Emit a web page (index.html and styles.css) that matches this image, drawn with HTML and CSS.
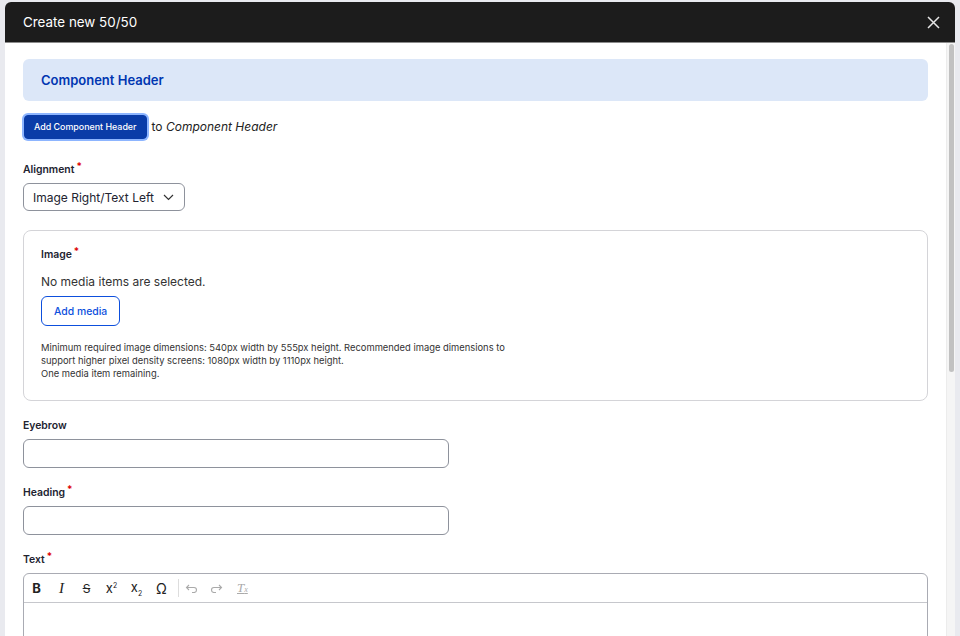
FILE: index.html
```html
<!DOCTYPE html>
<html lang="en">
<head>
    <meta charset="UTF-8">
    <meta name="viewport" content="width=device-width, initial-scale=1.0">
    <title>Create new 50/50</title>
    <link rel="stylesheet" href="styles.css">
</head>
<body>
    <div class="dialog">
        <div class="dialog-title">
            <span>Create new 50/50</span>
            <svg class="close" width="13" height="13" viewBox="0 0 13 13">
                <path d="M1 1 L12 12 M12 1 L1 12" stroke="#e6e6e6" stroke-width="1.5" fill="none"/>
            </svg>
        </div>
        <div class="dialog-body">
            <div class="content">
                <div class="section-header">Component Header</div>

                <div class="add-row">
                    <button class="btn-primary">Add Component Header</button>
                    <span>to <em>Component Header</em></span>
                </div>

                <div class="field first">
                    <label class="label required">Alignment</label>
                    <div class="select">
                        <span>Image Right/Text Left</span>
                        <svg width="11" height="7" viewBox="0 0 11 7">
                            <path d="M1 1 L5.5 5.5 L10 1" stroke="#333" stroke-width="1.2" fill="none"/>
                        </svg>
                    </div>
                </div>

                <div class="media-box">
                    <label class="label required">Image</label>
                    <p class="media-empty">No media items are selected.</p>
                    <button class="btn-outline">Add media</button>
                    <div class="description">
                        Minimum required image dimensions: 540px width by 555px height. Recommended image dimensions to<br>
                        support higher pixel density screens: 1080px width by 1110px height.<br>
                        One media item remaining.
                    </div>
                </div>

                <div class="field">
                    <label class="label">Eyebrow</label>
                    <input class="text-input" type="text">
                </div>

                <div class="field">
                    <label class="label required">Heading</label>
                    <input class="text-input" type="text">
                </div>

                <div class="field">
                    <label class="label required">Text</label>
                    <div class="editor">
                        <div class="toolbar">
                            <span class="tool bold">B</span>
                            <span class="tool italic">I</span>
                            <span class="tool strike">S</span>
                            <span class="tool">x<sup>2</sup></span>
                            <span class="tool">x<sub>2</sub></span>
                            <span class="tool omega">Ω</span>
                            <span class="sep"></span>
                            <svg class="tool-icon" width="14" height="10" viewBox="0 0 14 10">
                                <path d="M4 2 L1.5 4.5 L4 7 M1.5 4.5 H9 A2.5 2.5 0 0 1 9 9.5 H7" stroke="#aaa" stroke-width="1.1" fill="none"/>
                            </svg>
                            <svg class="tool-icon" width="14" height="10" viewBox="0 0 14 10">
                                <path d="M10 2 L12.5 4.5 L10 7 M12.5 4.5 H5 A2.5 2.5 0 0 0 5 9.5 H7" stroke="#aaa" stroke-width="1.1" fill="none"/>
                            </svg>
                            <span class="clear">T<small>x</small></span>
                        </div>
                        <div class="editor-area"></div>
                    </div>
                </div>
            </div>
            <div class="scrollbar">
                <div class="thumb"></div>
            </div>
        </div>
    </div>
</body>
</html>
```

FILE: styles.css
```css
body {
    font-family: Inter, "Noto Sans", sans-serif;
    margin: 0;
    background-color: #e9eaef;
    height: 636px;
    overflow: hidden;
    color: #222330;
}

.dialog {
    margin: 2px 0 0 5px;
    width: 950px;
    height: 634px;
    background-color: white;
    border-radius: 6px 6px 0 0;
    overflow: hidden;
    display: flex;
    flex-direction: column;
}

.dialog-title {
    height: 40px;
    flex-shrink: 0;
    background-color: #1c1c1c;
    border-bottom: 1px solid #8c8c8c;
    color: white;
    font-size: 13.4px;
    display: flex;
    align-items: center;
    justify-content: space-between;
    padding: 0 15px 0 18px;
}

.dialog-body {
    flex: 1;
    display: flex;
    min-height: 0;
}

.content {
    flex: 1;
    padding: 16px 18px 0 18px;
}

.scrollbar {
    width: 9px;
    box-sizing: border-box;
    background-color: #f5f5f5;
    border-left: 1px solid #ececec;
    padding: 1px 1px 0 2px;
}

.thumb {
    height: 328px;
    background-color: #c1c1c1;
    border-radius: 3px;
}

.section-header {
    background-color: #dce7f8;
    border-radius: 6px;
    height: 42px;
    padding-left: 18px;
    display: flex;
    align-items: center;
    color: #0036b1;
    font-weight: 600;
    font-size: 13px;
}

.add-row {
    display: flex;
    align-items: center;
    gap: 5px;
    margin-top: 13px;
    height: 25px;
    font-size: 12px;
    color: #222;
}

.btn-primary {
    font-family: inherit;
    background-color: #0a3ca8;
    color: white;
    border: 1px solid #0a3ca8;
    border-radius: 4px;
    height: 24px;
    padding: 0 9px;
    font-size: 8.9px;
    font-weight: 500;
    box-shadow: 0 0 0 2px #8db5ff;
    margin-left: 1px;
}

.field {
    margin-top: 18px;
}

.field.first {
    margin-top: 24px;
}

.label {
    display: block;
    font-size: 10.4px;
    line-height: 13px;
    height: 13px;
    font-weight: 600;
    color: #222330;
    margin-bottom: 7px;
}

.required::after {
    content: "*";
    color: #d00;
    margin-left: 2px;
    font-size: 10px;
    line-height: 0;
    position: relative;
    top: -3px;
}

.select {
    display: flex;
    width: fit-content;
    align-items: center;
    gap: 9px;
    height: 28px;
    box-sizing: border-box;
    border: 1px solid #8e929c;
    border-radius: 6px;
    padding: 0 10px 0 9px;
    font-size: 12px;
}

.media-box {
    margin-top: 19px;
    border: 1px solid #d4d4d8;
    border-radius: 8px;
    padding: 17px 17px 20px 17px;
}

.media-box .label {
    margin-bottom: 13px;
}

.media-empty {
    margin: 0 0 7px 0;
    font-size: 12px;
    line-height: 15px;
    color: #333;
}

.btn-outline {
    display: block;
    font-family: inherit;
    background: white;
    border: 1.5px solid #0d4fdd;
    color: #0d4fdd;
    border-radius: 6px;
    height: 30px;
    padding: 0 12px;
    font-size: 10.4px;
    font-weight: 500;
}

.description {
    margin-top: 15px;
    font-size: 9.4px;
    line-height: 13px;
    color: #333;
}

.text-input {
    display: block;
    width: 426px;
    height: 29px;
    box-sizing: border-box;
    border: 1px solid #8e929c;
    border-radius: 6px;
    margin: 0;
}

.editor {
    border: 1px solid #a9abb3;
    border-radius: 6px 6px 0 0;
    height: 80px;
}

.toolbar {
    height: 28px;
    border-bottom: 1px solid #c6c7cc;
    display: flex;
    align-items: center;
}

.tool {
    width: 25px;
    text-align: center;
    font-size: 13px;
    color: #222;
}

.tool sup, .tool sub {
    font-size: 7px;
}

.bold {
    font-weight: 700;
}

.italic {
    font-family: "Liberation Serif", serif;
    font-style: italic;
    font-size: 15px;
}

.strike {
    text-decoration: line-through;
    font-size: 12px;
}

.omega {
    font-size: 14px;
}

.sep {
    width: 1px;
    height: 18px;
    background-color: #ddd;
    margin: 0 6px 0 4px;
}

.tool-icon {
    margin-right: 10px;
}

.clear {
    margin-left: 4px;
    font-family: "Liberation Serif", serif;
    font-style: italic;
    color: #aaa;
    text-decoration: underline;
    font-size: 13px;
}

.clear small {
    font-size: 8px;
}
```
